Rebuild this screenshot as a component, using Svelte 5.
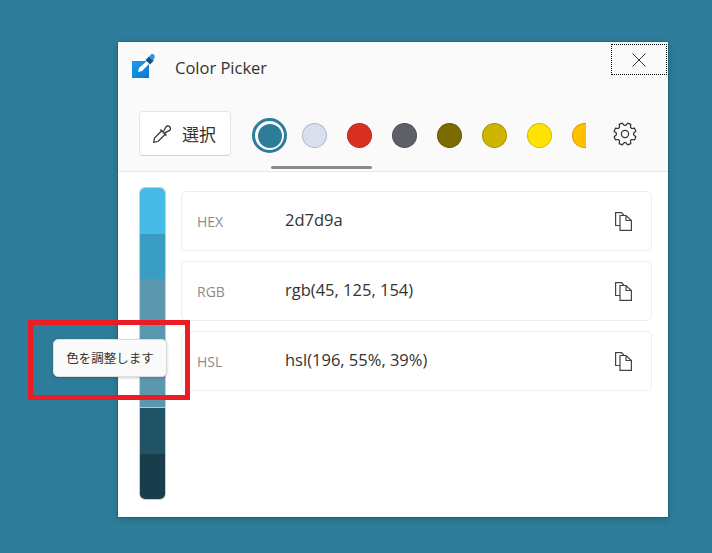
<script>
	const swatches = ['#d8e0ee', '#da3024', '#5d6068', '#7c6b00', '#cdb500', '#ffe300', '#ffc000'];
	const shades = [
		{ color: '#47bbe8', height: 46 },
		{ color: '#3a9dc2', height: 45 },
		{ color: '#5b98af', height: 128 },
		{ color: '#a9cdda', height: 1 },
		{ color: '#1f5365', height: 46 },
		{ color: '#183e4c', height: 45 }
	];
	const rows = [
		{ label: 'HEX', value: '2d7d9a' },
		{ label: 'RGB', value: 'rgb(45, 125, 154)' },
		{ label: 'HSL', value: 'hsl(196, 55%, 39%)' }
	];

	// eight teeth round the centre of a 24px box
	function gearPath() {
		const points = [];
		for (let i = 0; i < 8; i++) {
			const a = (i * Math.PI) / 4 + Math.PI / 8;
			for (const [r, d] of [[8.6, -0.3], [11.2, -0.15], [11.2, 0.15], [8.6, 0.3]]) {
				const x = 12 + r * Math.cos(a + d);
				const y = 12 + r * Math.sin(a + d);
				points.push(x.toFixed(2) + ' ' + y.toFixed(2));
			}
		}
		return 'M' + points.join('L') + 'z';
	}
</script>

<div class="desktop">
	<div class="window">
		<header class="toolbar">
			<div class="titlebar">
				<svg class="logo" width="24" height="24" viewBox="0 0 24 24">
					<defs>
						<linearGradient id="logo-fill" x1="0" y1="0" x2="1" y2="1">
							<stop offset="0" stop-color="#1c9cf0" />
							<stop offset="1" stop-color="#0a78c8" />
						</linearGradient>
					</defs>
					<path d="M0 7h17v17H0z" fill="url(#logo-fill)" />
					<path d="M6 18l1-4 10-9 2.500 2.500-9.500 9.500z" fill="#fff" />
					<path d="M13.500 6l3.500-3.500 4.500 4.500-3.500 3.500z" fill="#17508a" />
					<path d="M17 2.500l2-2c1-.8 3-.4 3.500 1s.2 2-.5 3l-.5 2.500z" fill="#1c9cf0" />
				</svg>
				<span class="title">Color Picker</span>
				<button class="close" aria-label="Close">
					<svg width="14" height="14" viewBox="0 0 14 14"><path d="M.5.500l13 13M13.500.500l-13 13" stroke="#333" fill="none" /></svg>
				</button>
			</div>
			<div class="tools">
				<button class="pick">
					<svg width="18" height="18" viewBox="0 0 18 18" fill="none" stroke="#333" stroke-width="1.200">
						<path d="M9 5.500L1.500 13l-.8 4.300 4.300-.8 7.500-7.500" />
						<path d="M7.500 4.500l6 6" stroke-width="1.500" />
						<path d="M10.500 6.500l2.200-4.200c1-1.500 2.800-1.800 4-.6s.9 3-.6 4l-4.200 2.200" stroke-width="1.300" />
					</svg>
					<span>選択</span>
				</button>
				<div class="swatches">
					<span class="current"><span></span></span>
					{#each swatches as color}
						<span class="swatch" style="background: {color}"></span>
					{/each}
				</div>
				<svg class="gear" width="24" height="24" viewBox="0 0 24 24" fill="none" stroke="#333" stroke-width="1.200" stroke-linejoin="round">
					<circle cx="12" cy="12" r="3.600" />
					<path d={gearPath()} />
				</svg>
			</div>
			<div class="scrollbar"></div>
		</header>
		<main class="content">
			<div class="shades">
				{#each shades as shade}
					<div style="background: {shade.color}; height: {shade.height}px"></div>
				{/each}
			</div>
			<div class="rows">
				{#each rows as row}
					<div class="row">
						<span class="label">{row.label}</span>
						<span class="value">{row.value}</span>
						<svg width="17" height="19" viewBox="0 0 17 19" fill="none" stroke="#444" stroke-width="1.200">
							<path d="M5 13.500H.6V.6h6l2.500 2.900" />
							<path d="M5 3.500h6l5.400 5v9.900H5zM11 3.500v5h5.400" />
						</svg>
					</div>
				{/each}
			</div>
		</main>
	</div>
	<div class="tooltip">色を調整します</div>
	<div class="highlight"></div>
</div>

<style>
	:global(body) {
		background: #2d7d9a;
	}

	.desktop {
		position: relative;
		box-sizing: border-box;
		height: 553px;
		padding: 42px 0 0 118px;
		overflow: hidden;
		font-family: 'Open Sans', 'Noto Sans CJK JP', sans-serif;
		color: #333;
	}

	.window {
		width: 550px;
		height: 475px;
		background: #fff;
		box-shadow: 0 0 0 1px rgba(0, 0, 0, 0.12), 0 2px 8px rgba(0, 0, 0, 0.2);
	}

	.toolbar {
		position: relative;
		height: 129px;
		background: #fafafa;
		border-bottom: 1px solid #e8e8e8;
	}

	.titlebar {
		display: flex;
		align-items: center;
		height: 50px;
		padding-left: 14px;
	}

	.logo {
		margin-top: -3px;
	}

	.title {
		margin-left: 19px;
		font-size: 16.5px;
		margin-top: 1px;
	}

	.close {
		display: flex;
		align-items: center;
		justify-content: center;
		align-self: flex-start;
		box-sizing: border-box;
		width: 56px;
		height: 31px;
		margin: 2px 1px 0 auto;
		background: none;
		border: 1px dotted #000;
		padding: 0;
	}

	.tools {
		display: flex;
		align-items: center;
		padding: 19px 0 0 21px;
	}

	.pick {
		display: flex;
		align-items: center;
		gap: 11px;
		box-sizing: border-box;
		width: 92px;
		height: 45px;
		padding: 0 0 0 13px;
		background: #fff;
		border: 1px solid #e6e6e6;
		border-bottom-color: #d4d4d4;
		border-radius: 4px;
		font: inherit;
		font-size: 17px;
		color: #333;
	}

	.swatches {
		display: flex;
		align-items: center;
		gap: 20px;
		width: 334px;
		margin: 4px 0 0 21px;
		overflow: hidden;
	}

	.current {
		flex: none;
		display: flex;
		align-items: center;
		justify-content: center;
		box-sizing: border-box;
		width: 35px;
		height: 35px;
		border: 3px solid #2d7d9a;
		border-radius: 50%;
		margin-right: -5px;
	}

	.current span {
		width: 24px;
		height: 24px;
		border-radius: 50%;
		background: #2d7d9a;
	}

	.swatch {
		flex: none;
		box-sizing: border-box;
		width: 25px;
		height: 25px;
		border: 1px solid rgba(0, 0, 0, 0.18);
		border-radius: 50%;
	}

	.gear {
		margin-left: 27px;
	}

	.scrollbar {
		position: absolute;
		left: 153px;
		top: 124px;
		width: 101px;
		height: 3px;
		border-radius: 2px;
		background: #8a8a8a;
	}

	.content {
		display: flex;
		padding: 15px 16px 0 21px;
	}

	.shades {
		flex: none;
		box-sizing: border-box;
		width: 27px;
		height: 313px;
		border: 1px solid #c8cdcf;
		border-radius: 6px;
		overflow: hidden;
	}

	.rows {
		flex: 1;
		display: flex;
		flex-direction: column;
		gap: 10px;
		margin: 4px 0 0 15px;
	}

	.row {
		display: flex;
		align-items: center;
		box-sizing: border-box;
		height: 60px;
		padding: 0 19px 0 15px;
		border: 1px solid #eeeeee;
		border-radius: 5px;
	}

	.label {
		width: 88px;
		font-size: 14px;
		color: #8b8b8b;
	}

	.value {
		flex: 1;
		font-size: 16.5px;
		margin-top: -3px;
	}

	.tooltip {
		position: absolute;
		left: 53px;
		top: 339px;
		box-sizing: border-box;
		width: 114px;
		height: 38px;
		line-height: 37px;
		text-align: center;
		font-size: 12.5px;
		background: #fafafa;
		border: 1px solid #ddd;
		border-radius: 5px;
		box-shadow: 0 1px 3px rgba(0, 0, 0, 0.2);
	}

	.highlight {
		position: absolute;
		left: 28px;
		top: 320px;
		box-sizing: border-box;
		width: 162px;
		height: 80px;
		border: 5px solid #ec1c24;
	}
</style>
